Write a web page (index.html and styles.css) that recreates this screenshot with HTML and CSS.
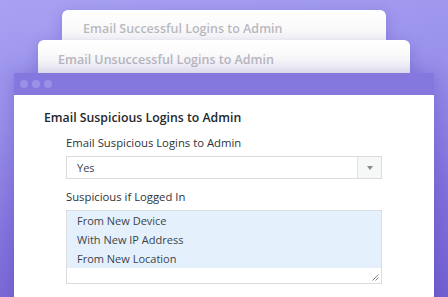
FILE: index.html
```html
<!DOCTYPE html>
<html>
<head>
<meta charset="utf-8">
<link rel="stylesheet" href="styles.css">
</head>
<body>
<div class="scene">
  <div class="card card-back">Email Successful Logins to Admin</div>
  <div class="card card-mid">Email Unsuccessful Logins to Admin</div>
  <div class="window">
    <div class="titlebar"><span class="dot"></span><span class="dot"></span><span class="dot"></span></div>
    <div class="content">
      <h2 class="heading">Email Suspicious Logins to Admin</h2>
      <div class="field">
        <div class="label">Email Suspicious Logins to Admin</div>
        <div class="select">
          <span class="select-value">Yes</span>
          <span class="select-arrow"><svg width="6" height="4" viewBox="0 0 6 4"><path d="M0 0h6L3 4z" fill="#8a8a8a"/></svg></span>
        </div>
      </div>
      <div class="field">
        <div class="label">Suspicious if Logged In</div>
        <div class="multi">
          <div class="opt">From New Device</div>
          <div class="opt">With New IP Address</div>
          <div class="opt">From New Location</div>
          <svg class="grip" width="8" height="8" viewBox="0 0 8 8"><path d="M7.5 1.5L1.5 7.5M7.5 4.5L4.5 7.5" stroke="#888" stroke-width="1"/></svg>
        </div>
      </div>
    </div>
  </div>
</div>
</body>
</html>
```
FILE: styles.css
```css
html, body {
  margin: 0;
  padding: 0;
}
body {
  width: 448px;
  height: 297px;
  overflow: hidden;
  font-family: "Open Sans", "Noto Sans", sans-serif;
  background: linear-gradient(172deg, #a8a1f2 0%, #9890ea 35%, #8172dc 70%, #7462d2 100%);
}
.scene {
  padding-top: 10px;
}
.card {
  background: linear-gradient(#ffffff, #f6f6f8);
  border-radius: 6px 6px 0 0;
  color: #b9b9be;
  font-weight: 600;
  font-size: 12.5px;
  box-shadow: 0 4px 14px rgba(60, 40, 160, 0.25);
  box-sizing: border-box;
}
.card-back {
  margin-left: 62px;
  width: 324px;
  height: 30px;
  padding: 10px 0 0 21px;
  line-height: 17px;
}
.card-mid {
  position: relative;
  margin-left: 38px;
  width: 372px;
  height: 33px;
  padding: 11px 0 0 20px;
  line-height: 17px;
}
.window {
  position: relative;
  margin-left: 14px;
  width: 420px;
  box-shadow: 0 0 18px rgba(60, 40, 160, 0.3);
}
.titlebar {
  height: 22px;
  background: #8477dd;
  display: flex;
  align-items: center;
  gap: 4px;
  padding-left: 6px;
}
.dot {
  width: 8px;
  height: 8px;
  border-radius: 50%;
  background: #9b91e8;
}
.content {
  background: #fff;
  height: 210px;
  padding: 15px 0 0 30px;
  box-sizing: border-box;
}
.heading {
  margin: 0;
  font-size: 12.3px;
  font-weight: 600;
  line-height: 16px;
  color: #23282d;
}
.field {
  margin-left: 22px;
  width: 316px;
}
.label {
  font-size: 11.3px;
  line-height: 16px;
  color: #2c3338;
  margin-top: 9px;
  margin-bottom: 5px;
}
.field + .field .label {
  margin-top: 10px;
}
.select {
  height: 23px;
  border: 1px solid #dcdcde;
  box-sizing: border-box;
  display: flex;
  align-items: center;
  font-size: 11px;
  color: #3c434a;
}
.select-value {
  flex: 1;
  padding-left: 10px;
}
.select-arrow {
  width: 23px;
  height: 100%;
  border-left: 1px solid #e2e2e4;
  background: #f6f7f7;
  display: flex;
  align-items: center;
  justify-content: center;
}
.multi {
  position: relative;
  height: 74px;
  border: 1px solid #dcdcde;
  box-sizing: border-box;
  font-size: 11px;
  color: #3c434a;
}
.opt {
  background: #e4f1fc;
  line-height: 19px;
  padding-left: 10px;
}
.grip {
  position: absolute;
  right: 2px;
  bottom: 2px;
}
```
